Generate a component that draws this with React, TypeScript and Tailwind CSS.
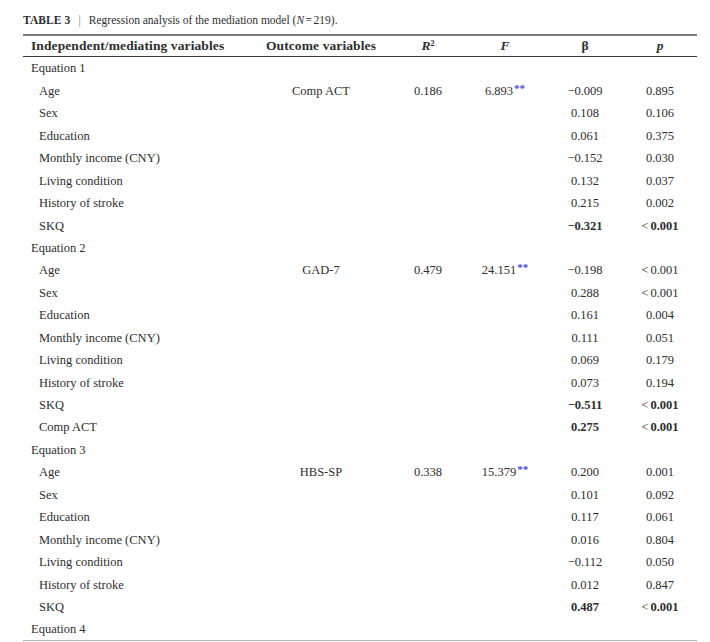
import React from 'react';

type Row = {
  label: string;
  eq?: boolean;
  outcome?: string;
  r2?: string;
  f?: string;
  beta?: string;
  p?: string;
  bold?: boolean;
};

const rows: Row[] = [
  { label: 'Equation 1', eq: true },
  { label: 'Age', outcome: 'Comp ACT', r2: '0.186', f: '6.893', beta: '\u22120.009', p: '0.895' },
  { label: 'Sex', beta: '0.108', p: '0.106' },
  { label: 'Education', beta: '0.061', p: '0.375' },
  { label: 'Monthly income (CNY)', beta: '\u22120.152', p: '0.030' },
  { label: 'Living condition', beta: '0.132', p: '0.037' },
  { label: 'History of stroke', beta: '0.215', p: '0.002' },
  { label: 'SKQ', beta: '\u22120.321', p: '<0.001', bold: true },
  { label: 'Equation 2', eq: true },
  { label: 'Age', outcome: 'GAD-7', r2: '0.479', f: '24.151', beta: '\u22120.198', p: '<0.001' },
  { label: 'Sex', beta: '0.288', p: '<0.001' },
  { label: 'Education', beta: '0.161', p: '0.004' },
  { label: 'Monthly income (CNY)', beta: '0.111', p: '0.051' },
  { label: 'Living condition', beta: '0.069', p: '0.179' },
  { label: 'History of stroke', beta: '0.073', p: '0.194' },
  { label: 'SKQ', beta: '\u22120.511', p: '<0.001', bold: true },
  { label: 'Comp ACT', beta: '0.275', p: '<0.001', bold: true },
  { label: 'Equation 3', eq: true },
  { label: 'Age', outcome: 'HBS-SP', r2: '0.338', f: '15.379', beta: '0.200', p: '0.001' },
  { label: 'Sex', beta: '0.101', p: '0.092' },
  { label: 'Education', beta: '0.117', p: '0.061' },
  { label: 'Monthly income (CNY)', beta: '0.016', p: '0.804' },
  { label: 'Living condition', beta: '\u22120.112', p: '0.050' },
  { label: 'History of stroke', beta: '0.012', p: '0.847' },
  { label: 'SKQ', beta: '0.487', p: '<0.001', bold: true },
  { label: 'Equation 4', eq: true },
];

const grid = 'grid grid-cols-[226px_144px_70px_84px_76px_74px] items-center';

function PValue({ v, bold }: { v: string; bold?: boolean }) {
  if (v.startsWith('<')) {
    return (
      <span>
        <span className="font-normal mr-[2px]">&lt;</span>
        <span className={bold ? 'font-bold' : ''}>{v.slice(1)}</span>
      </span>
    );
  }
  return <span className={bold ? 'font-bold' : ''}>{v}</span>;
}

export default function App() {
  return (
    <div className="w-[710px] h-[642px] bg-white overflow-hidden text-[#2e2e2e] font-['Liberation_Serif',serif]">
      <div className="pl-[23px] pt-[13px] h-[34px] text-[11.5px] leading-[15px] flex items-start">
        <span className="font-bold tracking-[0.1px]">TABLE 3</span>
        <span className="mx-[8px] text-[#888]">|</span>
        <span>
          Regression analysis of the mediation model (<i>N</i>
          <span className="mx-[1.5px]">=</span>219).
        </span>
      </div>

      <div className="ml-[23px] w-[674px]">
        <div className={`${grid} h-[23px] border-t-2 border-[#7d7d7d] border-b-[1.5px] border-b-[#3a3a3a] text-[13.5px] font-bold`}>
          <div className="pl-[8px] tracking-[0.1px]">Independent/mediating variables</div>
          <div className="text-center tracking-[0.1px]">Outcome variables</div>
          <div className="text-center italic">
            R<sup className="text-[8px] not-italic">2</sup>
          </div>
          <div className="text-center italic">F</div>
          <div className="text-center">β</div>
          <div className="text-center italic">p</div>
        </div>

        <div className="border-b border-[#b5b5b5]">
          {rows.map((r, i) => (
            <div key={i} className={`${grid} h-[22.44px] pt-[1px] text-[12.5px] leading-none`}>
              <div className={r.eq ? 'pl-[8px]' : 'pl-[16px]'}>{r.label}</div>
              <div className="text-center">{r.outcome}</div>
              <div className="text-center">{r.r2}</div>
              <div className="text-center whitespace-nowrap">
                {r.f && (
                  <span>
                    {r.f}
                    <span className="relative top-[-3px] text-[#4747e8] text-[11px] font-bold ml-[1px]">**</span>
                  </span>
                )}
              </div>
              <div className={`text-center ${r.bold ? 'font-bold' : ''}`}>{r.beta}</div>
              <div className="text-center">{r.p && <PValue v={r.p} bold={r.bold} />}</div>
            </div>
          ))}
        </div>
      </div>
    </div>
  );
}
